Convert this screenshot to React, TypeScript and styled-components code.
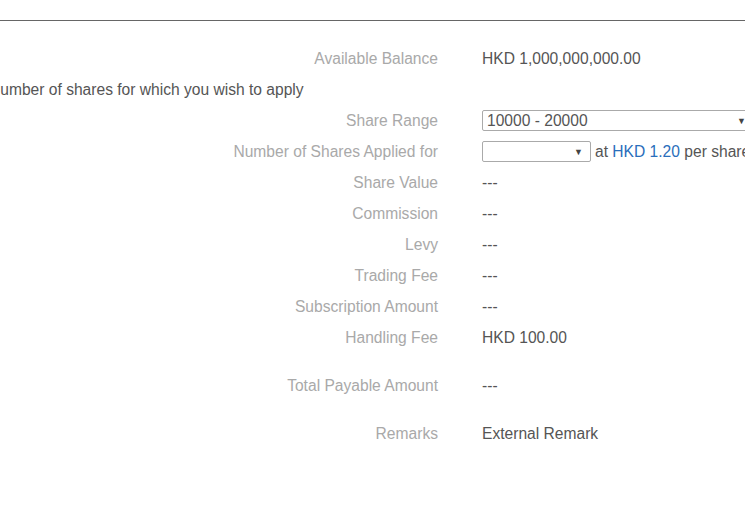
import React from "react";
import styled, { createGlobalStyle } from "styled-components";

const Global = createGlobalStyle`
  html, body { margin: 0; padding: 0; background: #fff; overflow: hidden; }
  body { font-family: "Liberation Sans", Arial, sans-serif; }
`;

const Page = styled.div`
  width: 745px;
  height: 512px;
  overflow: hidden;
  padding-top: 20px;
  box-sizing: border-box;
`;

const Divider = styled.hr`
  margin: 0;
  border: none;
  border-top: 1px solid #666;
  width: 100%;
`;

const Form = styled.div`
  display: flex;
  flex-direction: column;
  padding-top: 22px;
`;

const Row = styled.div<{ $spaced?: boolean }>`
  display: grid;
  grid-template-columns: 438px 1fr;
  column-gap: 44px;
  align-items: center;
  height: 31px;
  margin-top: ${(p) => (p.$spaced ? "17px" : "0")};
  font-size: 15.6px;
`;

const Label = styled.div`
  text-align: right;
  color: #a9a9a9;
  white-space: nowrap;
`;

const Value = styled.div`
  color: #555;
  display: flex;
  align-items: center;
  white-space: nowrap;
`;

const Subtitle = styled.div`
  height: 31px;
  display: flex;
  align-items: center;
  margin-left: -11px;
  font-size: 15.6px;
  color: #555;
  white-space: nowrap;
`;

const Select = styled.div<{ $width: number }>`
  position: relative;
  flex: none;
  box-sizing: border-box;
  width: ${(p) => p.$width}px;
  height: 21px;
  border: 1px solid #aaa;
  border-radius: 2px;
  padding: 0 0 0 4px;
  display: flex;
  align-items: center;
  color: #555;
  font-size: 15.6px;
  background: #fff;
`;

const Arrow = styled.span`
  position: absolute;
  right: 7px;
  top: 50%;
  transform: translateY(-50%);
  font-size: 9px;
  color: #444;
`;

const Suffix = styled.span`
  margin-left: 4px;
  color: #555;
`;

const Price = styled.span`
  color: #2a6ebb;
`;

const Dash = styled.span`
  color: #555;
`;

export default function App() {
  return (
    <>
      <Global />
      <Page>
        <Divider />
        <Form>
          <Row>
            <Label>Available Balance</Label>
            <Value>HKD 1,000,000,000.00</Value>
          </Row>
          <Subtitle>Number of shares for which you wish to apply</Subtitle>
          <Row>
            <Label>Share Range</Label>
            <Value>
              <Select $width={272}>
                10000 - 20000
                <Arrow>▼</Arrow>
              </Select>
            </Value>
          </Row>
          <Row>
            <Label>Number of Shares Applied for</Label>
            <Value>
              <Select $width={109}>
                <Arrow>▼</Arrow>
              </Select>
              <Suffix>
                at <Price>HKD 1.20</Price> per share
              </Suffix>
            </Value>
          </Row>
          <Row>
            <Label>Share Value</Label>
            <Value><Dash>---</Dash></Value>
          </Row>
          <Row>
            <Label>Commission</Label>
            <Value><Dash>---</Dash></Value>
          </Row>
          <Row>
            <Label>Levy</Label>
            <Value><Dash>---</Dash></Value>
          </Row>
          <Row>
            <Label>Trading Fee</Label>
            <Value><Dash>---</Dash></Value>
          </Row>
          <Row>
            <Label>Subscription Amount</Label>
            <Value><Dash>---</Dash></Value>
          </Row>
          <Row>
            <Label>Handling Fee</Label>
            <Value>HKD 100.00</Value>
          </Row>
          <Row $spaced>
            <Label>Total Payable Amount</Label>
            <Value><Dash>---</Dash></Value>
          </Row>
          <Row $spaced>
            <Label>Remarks</Label>
            <Value>External Remark</Value>
          </Row>
        </Form>
      </Page>
    </>
  );
}
